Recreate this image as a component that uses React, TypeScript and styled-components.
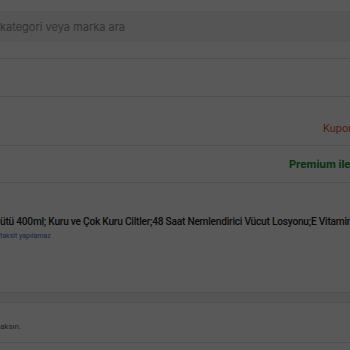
import React from 'react';
import styled, { createGlobalStyle } from 'styled-components';

const GlobalStyle = createGlobalStyle`
  html, body {
    margin: 0;
    padding: 0;
    background: #ffffff;
    overflow: hidden;
  }
  * { box-sizing: border-box; }
  body {
    font-family: Roboto, "Noto Sans", "Liberation Sans", sans-serif;
  }
`;

const Page = styled.div`
  width: 350px;
  height: 350px;
  overflow: hidden;
  background: #ffffff;
`;

const Header = styled.div`
  padding: 11px 0 16px 0;
  border-bottom: 1px solid #e3e3e3;
`;

const SearchBox = styled.div`
  height: 31px;
  background: #f3f3f3;
  display: flex;
  align-items: center;
  font-family: Inter, "Noto Sans", sans-serif;
  font-size: 11px;
  color: #8e8e8e;
  white-space: nowrap;
`;

const Row = styled.div<{ $h: number; $bottom?: boolean }>`
  height: ${p => p.$h}px;
  border-bottom: 1px solid #e3e3e3;
  display: flex;
  align-items: ${p => (p.$bottom ? 'flex-end' : 'center')};
  white-space: nowrap;
  overflow: hidden;
`;

const CouponText = styled.span`
  flex-shrink: 0;
  margin-left: 323px;
  padding-bottom: 10px;
  font-size: 11px;
  color: #e0542b;
`;

const PremiumText = styled.span`
  flex-shrink: 0;
  margin-left: 289px;
  font-family: Inter, "Noto Sans", sans-serif;
  font-size: 10.8px;
  font-weight: 700;
  color: #1a8a2a;
`;

const Product = styled.div`
  height: 109px;
  padding-top: 32px;
  white-space: nowrap;
  overflow: hidden;
`;

const Title = styled.div`
  font-size: 10.2px;
  font-weight: 500;
  color: #1e1e1e;
  line-height: 14px;
  letter-spacing: -0.25px;
`;

const Installment = styled.div`
  font-size: 7px;
  color: #3b73c4;
  margin-top: 3px;
`;

const Separator = styled.div`
  height: 11px;
  background: #f3f3f3;
  border-top: 1px solid #e6e6e6;
  border-bottom: 1px solid #e6e6e6;
`;

const Note = styled.div`
  height: 40px;
  border-bottom: 1px solid #e3e3e3;
  display: flex;
  align-items: center;
  padding-top: 7px;
  font-size: 8px;
  color: #555;
  white-space: nowrap;
`;

const Backdrop = styled.div`
  position: fixed;
  inset: 0;
  background: rgba(0, 0, 0, 0.65);
`;

export default function App() {
  return (
    <>
      <GlobalStyle />
      <Page>
        <Header>
          <SearchBox>kategori veya marka ara</SearchBox>
        </Header>
        <Row $h={38} />
        <Row $h={49} $bottom>
          <CouponText>Kupon</CouponText>
        </Row>
        <Row $h={37}>
          <PremiumText>Premium ile kazan</PremiumText>
        </Row>
        <Product>
          <Title>ütü 400ml; Kuru ve Çok Kuru Ciltler;48 Saat Nemlendirici Vücut Losyonu;E Vitamin</Title>
          <Installment>taksit yapılamaz</Installment>
        </Product>
        <Separator />
        <Note>aksın.</Note>
      </Page>
      <Backdrop />
    </>
  );
}
